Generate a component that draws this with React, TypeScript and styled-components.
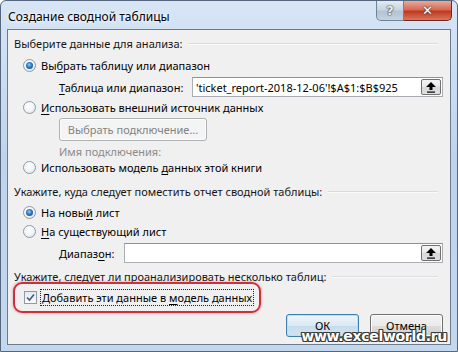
import React from 'react';
import styled, { createGlobalStyle } from 'styled-components';

const GlobalStyle = createGlobalStyle`
  html, body {
    margin: 0;
    padding: 0;
    background: #fff;
  }
  body {
    font-family: "Noto Sans", "Open Sans", sans-serif;
    font-size: 11px;
    color: #000;
  }
`;

const Window = styled.div`
  position: relative;
  box-sizing: border-box;
  width: 458px;
  height: 352px;
  display: flex;
  flex-direction: column;
  padding: 0 6px 6px 6px;
  border: 1px solid #56677d;
  border-radius: 6px 6px 0 0;
  background: linear-gradient(180deg, #d7e5f5 0%, #bfd4eb 45%, #c3d7ed 100%);
  overflow: hidden;
`;

const TitleBar = styled.div`
  height: 28px;
  display: flex;
  align-items: flex-start;
  justify-content: space-between;
`;

const Title = styled.span`
  margin: 7px 0 0 1px;
  font-size: 12px;
  color: #000;
  text-shadow: 0 0 6px #fff, 0 0 3px #fff;
`;

const CaptionButtons = styled.div`
  display: flex;
  margin-right: -1px;
`;

const CaptionButton = styled.div<{ $close?: boolean }>`
  box-sizing: border-box;
  height: 20px;
  width: ${p => (p.$close ? '48px' : '28px')};
  display: flex;
  align-items: center;
  justify-content: center;
  border: 1px solid ${p => (p.$close ? '#6e2a22' : '#6f8299')};
  border-top: none;
  border-radius: ${p => (p.$close ? '0 0 5px 0' : '0 0 0 5px')};
  border-left: ${p => (p.$close ? 'none' : '1px solid #6f8299')};
  background: ${p =>
    p.$close
      ? 'linear-gradient(180deg, #e9a99c 0%, #d66a55 45%, #c0391f 55%, #d9775f 100%)'
      : 'linear-gradient(180deg, #e3eaf2 0%, #c9d5e2 45%, #b4c3d4 55%, #c4d2e2 100%)'};
  color: ${p => (p.$close ? '#fff' : '#e8edf2')};
  font-family: "DejaVu Sans", sans-serif;
  font-weight: bold;
  font-size: 13px;
  text-shadow: 0 0 2px #333, 0 0 1px #333;
`;

const Client = styled.div`
  flex: 1;
  display: flex;
  flex-direction: column;
  border: 1px solid #6a7b91;
  background: #f0f0f0;
  padding: 5px 7px 0 0;
`;

const GroupHeader = styled.div<{ $mt?: number }>`
  height: 16px;
  margin-top: ${p => p.$mt ?? 0}px;
  display: flex;
  align-items: center;
  gap: 6px;
  padding-left: 6px;
  color: #151515;
  white-space: nowrap;

  &::after {
    content: '';
    flex: 1;
    height: 1px;
    margin-right: 5px;
    margin-top: 1px;
    background: #d9dde2;
    box-shadow: 0 1px 0 #fafafa;
  }
`;

const OptionRow = styled.label<{ $mt?: number }>`
  height: 16px;
  margin-top: ${p => p.$mt ?? 0}px;
  display: flex;
  align-items: center;
  gap: 5px;
  padding-left: 15px;
  white-space: nowrap;
`;

const Radio = styled.span<{ $checked?: boolean }>`
  box-sizing: border-box;
  width: 13px;
  height: 13px;
  border-radius: 50%;
  border: 1px solid #8e9aa7;
  background: radial-gradient(circle at 40% 35%, #ffffff 0%, #f1f3f5 55%, #d3d8de 100%);
  display: flex;
  align-items: center;
  justify-content: center;

  &::after {
    content: '';
    display: ${p => (p.$checked ? 'block' : 'none')};
    width: 7px;
    height: 7px;
    border-radius: 50%;
    background: radial-gradient(circle at 45% 40%, #8fd0f4 0%, #2b79c2 45%, #123d6b 100%);
  }
`;

const Check = styled.span`
  box-sizing: border-box;
  width: 13px;
  height: 13px;
  border: 1px solid #8e9aa7;
  background: linear-gradient(180deg, #e6e9ec 0%, #fbfbfb 100%);
  display: flex;
  align-items: center;
  justify-content: center;
`;

const Focus = styled.span`
  padding: 0 1px;
  outline: 1px dotted #222;
  outline-offset: 0;
  line-height: 15px;
`;

const Key = styled.u`
  text-underline-offset: 2px;
`;

const FieldRow = styled.div<{ $mt?: number; $labelWidth: number; $disabled?: boolean }>`
  height: 20px;
  margin-top: ${p => p.$mt ?? 0}px;
  display: grid;
  grid-template-columns: ${p => p.$labelWidth}px 1fr;
  align-items: center;
  padding-left: 51px;
  white-space: nowrap;
  color: ${p => (p.$disabled ? '#8b8b8b' : '#000')};
`;

const Input = styled.div`
  box-sizing: border-box;
  height: 20px;
  display: flex;
  align-items: center;
  justify-content: space-between;
  border: 1px solid #abadb3;
  border-top-color: #8e9195;
  background: #fff;
  padding: 0 1px 0 3px;
  white-space: nowrap;
  overflow: hidden;
`;

const PickButton = styled.span`
  box-sizing: border-box;
  width: 20px;
  height: 16px;
  display: flex;
  align-items: center;
  justify-content: center;
  border: 1px solid #707070;
  border-radius: 2px;
  background: linear-gradient(180deg, #f4f4f4 0%, #e8e8e8 50%, #d8d8d8 51%, #e0e0e0 100%);
`;

const PushButton = styled.div<{ $width: number; $disabled?: boolean; $default?: boolean }>`
  box-sizing: border-box;
  width: ${p => p.$width}px;
  height: 23px;
  display: flex;
  align-items: center;
  justify-content: center;
  border-radius: 3px;
  border: 1px solid ${p => (p.$disabled ? '#adb2b5' : p.$default ? '#3c7fb1' : '#707070')};
  color: ${p => (p.$disabled ? '#838383' : '#000')};
  background: ${p =>
    p.$disabled
      ? '#f4f4f4'
      : p.$default
        ? 'linear-gradient(180deg, #eef6fb 0%, #dbe9f3 50%, #c6dced 51%, #d3e4f1 100%)'
        : 'linear-gradient(180deg, #f2f2f2 0%, #ebebeb 50%, #dddddd 51%, #cfcfcf 100%)'};
  box-shadow: ${p => (p.$default ? 'inset 0 0 0 1px #b9e0f7' : 'inset 0 0 0 1px #fcfcfc')};
`;

const ButtonIndent = styled.div`
  margin: 3px 0 0 51px;
`;

const Highlight = styled.div`
  box-sizing: border-box;
  width: 248px;
  height: 31px;
  margin: -2px 0 0 5px;
  display: flex;
  align-items: center;
  gap: 4px;
  padding-left: 9px;
  border: 2px solid #cf2f3c;
  border-radius: 9px;
  box-shadow: 0 0 3px rgba(170, 40, 50, 0.45);
  white-space: nowrap;
`;

const Footer = styled.div`
  margin-top: 1px;
  display: flex;
  justify-content: flex-end;
  gap: 11px;
`;

const Watermark = styled.div`
  position: absolute;
  right: 10px;
  bottom: 7px;
  font-family: "DejaVu Sans", sans-serif;
  font-weight: bold;
  font-size: 14px;
  letter-spacing: -0.3px;
  color: #fff;
  text-shadow: -1px -1px 0 #3a3a3a, 1px -1px 0 #3a3a3a, -1px 1px 0 #3a3a3a, 1px 1px 0 #3a3a3a,
    0 1px 0 #3a3a3a, 0 -1px 0 #3a3a3a, 1px 0 0 #3a3a3a, -1px 0 0 #3a3a3a;
`;

const UpArrow = () => (
  <svg width="10" height="11" viewBox="0 0 10 11">
    <polygon points="5,0 10,5 6.5,5 6.5,8 3.5,8 3.5,5 0,5" fill="#000" />
    <rect x="1" y="9.5" width="8" height="1.2" fill="#000" />
  </svg>
);

const CheckMark = () => (
  <svg width="9" height="9" viewBox="0 0 9 9">
    <path d="M1 4.5 L3.5 7 L8 1.5" fill="none" stroke="#3a5d8a" strokeWidth="1.6" />
  </svg>
);

export default function App() {
  return (
    <>
      <GlobalStyle />
      <Window>
        <TitleBar>
          <Title>Создание сводной таблицы</Title>
          <CaptionButtons>
            <CaptionButton>?</CaptionButton>
            <CaptionButton $close>✕</CaptionButton>
          </CaptionButtons>
        </TitleBar>
        <Client>
          <GroupHeader>Выберите данные для анализа:</GroupHeader>
          <OptionRow $mt={6}>
            <Radio $checked />
            <span>
              Вы<Key>б</Key>рать таблицу или диапазон
            </span>
          </OptionRow>
          <FieldRow $mt={4} $labelWidth={133}>
            <span>
              <Key>Т</Key>аблица или диапазон:
            </span>
            <Input>
              <span>'ticket_report-2018-12-06'!$A$1:$B$925</span>
              <PickButton>
                <UpArrow />
              </PickButton>
            </Input>
          </FieldRow>
          <OptionRow $mt={2}>
            <Radio />
            <span>
              <Key>И</Key>спользовать внешний источник данных
            </span>
          </OptionRow>
          <ButtonIndent>
            <PushButton $width={148} $disabled>
              Выбрать подключение...
            </PushButton>
          </ButtonIndent>
          <FieldRow $mt={0} $labelWidth={140} $disabled>
            <span>Имя подключения:</span>
          </FieldRow>
          <OptionRow $mt={-2}>
            <Radio />
            <span>
              Использовать модель <Key>д</Key>анных этой книги
            </span>
          </OptionRow>
          <GroupHeader $mt={8}>Укажите, куда следует поместить отчет сводной таблицы:</GroupHeader>
          <OptionRow $mt={5}>
            <Radio $checked />
            <span>
              На новы<Key>й</Key> лист
            </span>
          </OptionRow>
          <OptionRow $mt={3}>
            <Radio />
            <span>
              <Key>Н</Key>а существующий лист
            </span>
          </OptionRow>
          <FieldRow $mt={4} $labelWidth={65}>
            <span>
              Диапаз<Key>о</Key>н:
            </span>
            <Input>
              <span />
              <PickButton>
                <UpArrow />
              </PickButton>
            </Input>
          </FieldRow>
          <GroupHeader $mt={5}>Укажите, следует ли проанализировать несколько таблиц:</GroupHeader>
          <Highlight>
            <Check>
              <CheckMark />
            </Check>
            <Focus>
              Добавить эти данные в <Key>м</Key>одель данных
            </Focus>
          </Highlight>
          <Footer>
            <PushButton $width={73} $default>
              ОК
            </PushButton>
            <PushButton $width={73}>Отмена</PushButton>
          </Footer>
        </Client>
        <Watermark>www.excelworld.ru</Watermark>
      </Window>
    </>
  );
}
